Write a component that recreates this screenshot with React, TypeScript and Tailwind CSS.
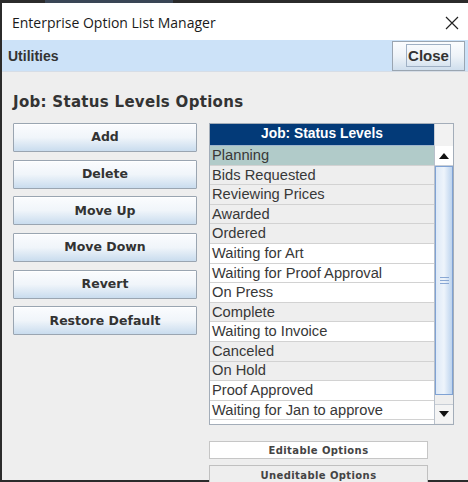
import React from "react";

const rows: { t: string; bg: string }[] = [
  { t: "Planning", bg: "sel" },
  { t: "Bids Requested", bg: "g" },
  { t: "Reviewing Prices", bg: "g" },
  { t: "Awarded", bg: "g" },
  { t: "Ordered", bg: "g" },
  { t: "Waiting for Art", bg: "w" },
  { t: "Waiting for Proof Approval", bg: "w" },
  { t: "On Press", bg: "w" },
  { t: "Complete", bg: "g" },
  { t: "Waiting to Invoice", bg: "w" },
  { t: "Canceled", bg: "g" },
  { t: "On Hold", bg: "g" },
  { t: "Proof Approved", bg: "w" },
  { t: "Waiting for Jan to approve", bg: "w" },
];

const buttons = ["Add", "Delete", "Move Up", "Move Down", "Revert", "Restore Default"];

function SwingButton({ label }: { label: string }) {
  return (
    <div className="h-[29px] w-[184px] border border-[#9aa5b1] rounded-[1px] bg-gradient-to-b from-[#fbfcfe] via-[#f0f5fa] to-[#c9dcee] flex items-center justify-center shadow-[inset_0_1px_0_#ffffff]">
      <span className="text-[12.5px] font-bold text-[#333333] [font-family:'DejaVu_Sans',sans-serif]">
        {label}
      </span>
    </div>
  );
}

export default function App() {
  return (
    <div className="w-[468px] h-[482px] bg-[#2b2b2b] overflow-hidden flex flex-col">
      <div className="h-[3px] flex shrink-0">
        <div className="w-[45px] bg-[#2b2b2b]" />
        <div className="w-[128px] bg-[#3a4656]" />
        <div className="flex-1 bg-[#2b2b2b]" />
      </div>
      <div className="ml-[2px] h-[477px] bg-[#eeeeee] flex flex-col">
        {/* title bar */}
        <div className="h-[37px] bg-white flex items-center justify-between pl-[10px] pr-[9px] pt-[2px] shrink-0">
          <span className="text-[14px] text-[#1a1a1a] [font-family:'Open_Sans','Noto_Sans',sans-serif]">
            Enterprise Option List Manager
          </span>
          <svg width="14" height="14" viewBox="0 0 14 14">
            <path d="M1 1 L13 13 M13 1 L1 13" stroke="#222" strokeWidth="1.2" />
          </svg>
        </div>
        {/* menu bar */}
        <div className="h-[32px] bg-[#cce2f8] border-b border-[#d6dde6] flex items-center justify-between pl-[6px] shrink-0">
          <span className="text-[14px] font-bold text-[#333333] mt-[2px] [font-family:'Liberation_Sans',Arial,sans-serif]">
            Utilities
          </span>
          <div className="h-[30px] w-[73px] mr-[3px] border border-[#9aa5b1] bg-gradient-to-b from-[#fbfcfe] via-[#eef3f8] to-[#cfdeed] flex items-center justify-center">
            <span className="border border-[#9fb0c4] px-[1px] leading-[21px] text-[15px] font-bold text-[#333333] [font-family:'Liberation_Sans',Arial,sans-serif]">
              Close
            </span>
          </div>
        </div>
        {/* content */}
        <div className="flex-1 flex flex-col pl-[11px]">
          <div className="h-[51px] flex items-center pt-[10px]">
            <span className="text-[15px] font-bold text-[#333333] [font-family:'DejaVu_Sans',sans-serif] tracking-[0.3px]">
              Job: Status Levels Options
            </span>
          </div>
          <div className="flex gap-[12px]">
            <div className="flex flex-col gap-[7.7px]">
              {buttons.map((b) => (
                <SwingButton key={b} label={b} />
              ))}
            </div>
            <div className="flex flex-col">
              <div className="w-[245px] h-[302px] border border-[#a3adb9] bg-[#eeeeee] flex flex-col">
                <div className="flex h-[22px] shrink-0">
                  <div className="w-[224px] bg-[#033a78] flex items-center justify-center border-b border-[#9eb4cc]">
                    <span className="text-[13.8px] font-bold text-white [font-family:'Liberation_Sans',Arial,sans-serif]">
                      Job: Status Levels
                    </span>
                  </div>
                  <div className="flex-1 bg-[#f2f2f2] border-l border-[#c8ced6]" />
                </div>
                <div className="flex flex-1 min-h-0">
                  <div className="w-[224px] flex flex-col bg-white overflow-hidden">
                    {rows.map((r) => (
                      <div
                        key={r.t}
                        className={
                          "h-[19.6px] shrink-0 border-b border-[#d2d2d2] flex items-center pl-[2px] " +
                          (r.bg === "sel"
                            ? "bg-[#b1cbc9]"
                            : r.bg === "g"
                            ? "bg-[#eeeeee]"
                            : "bg-white")
                        }
                      >
                        <span className="text-[14.7px] text-[#383838] leading-none [font-family:'Liberation_Sans',Arial,sans-serif]">
                          {r.t}
                        </span>
                      </div>
                    ))}
                  </div>
                  {/* scrollbar */}
                  <div className="flex-1 flex flex-col bg-[#eeeeee] border-l border-[#b8c0cb]">
                    <div className="h-[20px] bg-white border-b border-[#c8ced6] flex items-center justify-center">
                      <svg width="10" height="6" viewBox="0 0 10 6">
                        <path d="M0 6 L5 0 L10 6 Z" fill="#111" />
                      </svg>
                    </div>
                    <div className="h-[229px] bg-gradient-to-r from-[#dde9f7] via-[#eef4fb] to-[#bcd3ee] border border-[#7fa2d4] flex items-center justify-center">
                      <div className="flex flex-col gap-[2px]">
                        <div className="w-[9px] h-[1px] bg-[#8aa8d4]" />
                        <div className="w-[9px] h-[1px] bg-[#8aa8d4]" />
                        <div className="w-[9px] h-[1px] bg-[#8aa8d4]" />
                      </div>
                    </div>
                    <div className="h-[9px] bg-[#eeeeee]" />
                    <div className="h-[19px] bg-[#f4f4f4] border-t border-[#c8ced6] flex items-center justify-center">
                      <svg width="10" height="6" viewBox="0 0 10 6">
                        <path d="M0 0 L5 6 L10 0 Z" fill="#111" />
                      </svg>
                    </div>
                  </div>
                </div>
              </div>
              <div className="mt-[16px] w-[219px] h-[18px] bg-white border border-[#c6c6c6] flex items-center justify-center">
                <span className="text-[10px] font-bold text-[#444444] tracking-[0.4px] [font-family:'DejaVu_Sans',sans-serif]">
                  Editable Options
                </span>
              </div>
              <div className="mt-[6px] w-[219px] h-[20px] bg-[#eeeeee] border border-[#c0c0c0] flex items-center justify-center">
                <span className="text-[10px] font-bold text-[#444444] tracking-[0.4px] [font-family:'DejaVu_Sans',sans-serif]">
                  Uneditable Options
                </span>
              </div>
            </div>
          </div>
        </div>
      </div>
    </div>
  );
}
